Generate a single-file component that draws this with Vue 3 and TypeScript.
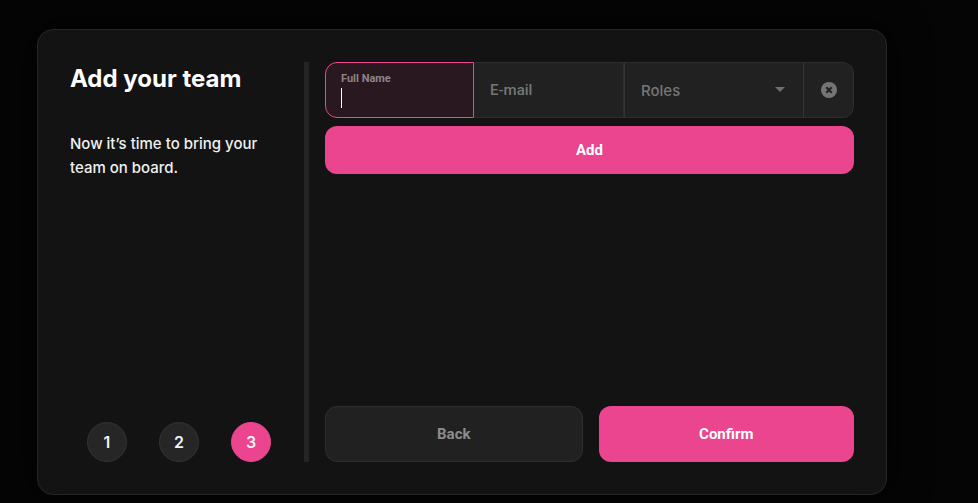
<template>
  <main class="page">
    <section class="card">
      <aside class="intro">
        <h1 class="title">Add your team</h1>
        <p class="lead">Now it’s time to bring your team on board.</p>
        <ol class="steps">
          <li
            v-for="step in steps"
            :key="step"
            :class="['step', { 'step-active': step === current }]"
          >
            {{ step }}
          </li>
        </ol>
      </aside>

      <div class="divider" />

      <div class="content">
        <div class="member-row">
          <label class="field field-focus">
            <span class="field-label">Full Name</span>
            <span class="caret" />
          </label>
          <div class="field field-email">E-mail</div>
          <div class="field field-roles">
            <span class="roles-text">Roles</span>
            <svg class="arrow" width="10" height="5" viewBox="0 0 10 5">
              <path d="M0 0h10L5 5z" fill="#6f6f6f" />
            </svg>
          </div>
          <button type="button" class="remove" aria-label="Remove">
            <svg width="16" height="16" viewBox="0 0 16 16">
              <circle cx="8" cy="8" r="8" fill="#757575" />
              <path d="M5.3 5.3l5.4 5.4M10.7 5.3l-5.4 5.4" stroke="#232323" stroke-width="2.2" />
            </svg>
          </button>
        </div>

        <button type="button" class="btn btn-add">Add</button>

        <div class="actions">
          <button type="button" class="btn btn-back">Back</button>
          <button type="button" class="btn btn-confirm">Confirm</button>
        </div>
      </div>
    </section>
  </main>
</template>

<script setup lang="ts">
const steps: number[] = [1, 2, 3]
const current = 3
</script>

<style>
html,
body {
  margin: 0;
  background: #030303;
}
</style>

<style scoped>
.page {
  box-sizing: border-box;
  height: 503px;
  padding: 29px 0 0 37px;
  overflow: hidden;
  background: #050505;
}

.card {
  box-sizing: border-box;
  display: flex;
  width: 850px;
  height: 466px;
  padding: 32px;
  background: #131313;
  border: 1px solid #262626;
  border-radius: 16px;
  box-shadow: 0 0 40px rgba(0, 0, 0, 0.9);
}

.intro {
  display: flex;
  flex-direction: column;
  width: 218px;
  margin-right: 16px;
  flex-shrink: 0;
}

.title {
  margin: 0;
  font-family: Inter, sans-serif;
  font-size: 24px;
  font-weight: 700;
  line-height: 34px;
  color: #fff;
}

.lead {
  margin: 36px 0 0;
  font-family: Inter, sans-serif;
  font-size: 15px;
  font-weight: 500;
  line-height: 24px;
  color: #f0f0f0;
}

.steps {
  display: flex;
  justify-content: center;
  gap: 32px;
  margin: auto 0 0;
  padding: 0;
  list-style: none;
}

.step {
  box-sizing: border-box;
  display: flex;
  align-items: center;
  justify-content: center;
  width: 40px;
  height: 40px;
  font-family: Inter, sans-serif;
  font-size: 16px;
  font-weight: 600;
  color: #f2f2f2;
  background: #262626;
  border: 1px solid #333;
  border-radius: 50%;
}

.step-active {
  background: #ea458e;
  border-color: #ea458e;
}

.divider {
  width: 5px;
  margin-right: 16px;
  flex-shrink: 0;
  background: #242424;
}

.content {
  display: flex;
  flex: 1;
  flex-direction: column;
  min-width: 0;
}

.member-row {
  box-sizing: border-box;
  display: flex;
  height: 56px;
}

.field {
  box-sizing: border-box;
  display: flex;
  align-items: center;
  height: 56px;
  background: #212121;
  border: 1px solid #2e2e2e;
  border-left: 0;
  font-family: Roboto, sans-serif;
  font-size: 15px;
  font-weight: 500;
  color: #767676;
}

.field-focus {
  position: relative;
  width: 149px;
  background: #2a1820;
  border: 1px solid #ea458e;
  border-radius: 12px 0 0 12px;
}

.field-label {
  position: absolute;
  top: 9px;
  left: 15px;
  font-size: 11px;
  font-weight: 700;
  line-height: 13px;
  color: #8d8489;
}

.caret {
  position: absolute;
  top: 25px;
  left: 15px;
  width: 1px;
  height: 20px;
  background: #fff;
}

.field-email {
  width: 150px;
  padding-left: 16px;
}

.field-roles {
  justify-content: space-between;
  width: 180px;
  padding: 0 18px 0 16px;
  font-family: Inter, sans-serif;
  border-left: 1px solid #333;
  border-right: 1px solid #333;
}

.arrow {
  margin-top: -2px;
}

.remove {
  box-sizing: border-box;
  display: flex;
  align-items: center;
  justify-content: center;
  width: 50px;
  height: 56px;
  padding: 0;
  background: #212121;
  border: 1px solid #2e2e2e;
  border-left: 0;
  border-radius: 0 12px 12px 0;
}

.btn {
  box-sizing: border-box;
  font-family: Roboto, sans-serif;
  font-size: 15px;
  font-weight: 700;
  color: #fff;
  background: #ea458e;
  border: 0;
  border-radius: 12px;
}

.btn-add {
  height: 48px;
  margin-top: 8px;
}

.actions {
  display: flex;
  gap: 16px;
  margin-top: auto;
}

.actions .btn {
  flex: 1;
  height: 56px;
}

.btn-back {
  color: #8c8c8c;
  background: #212121;
  border: 1px solid #2e2e2e;
}
</style>
